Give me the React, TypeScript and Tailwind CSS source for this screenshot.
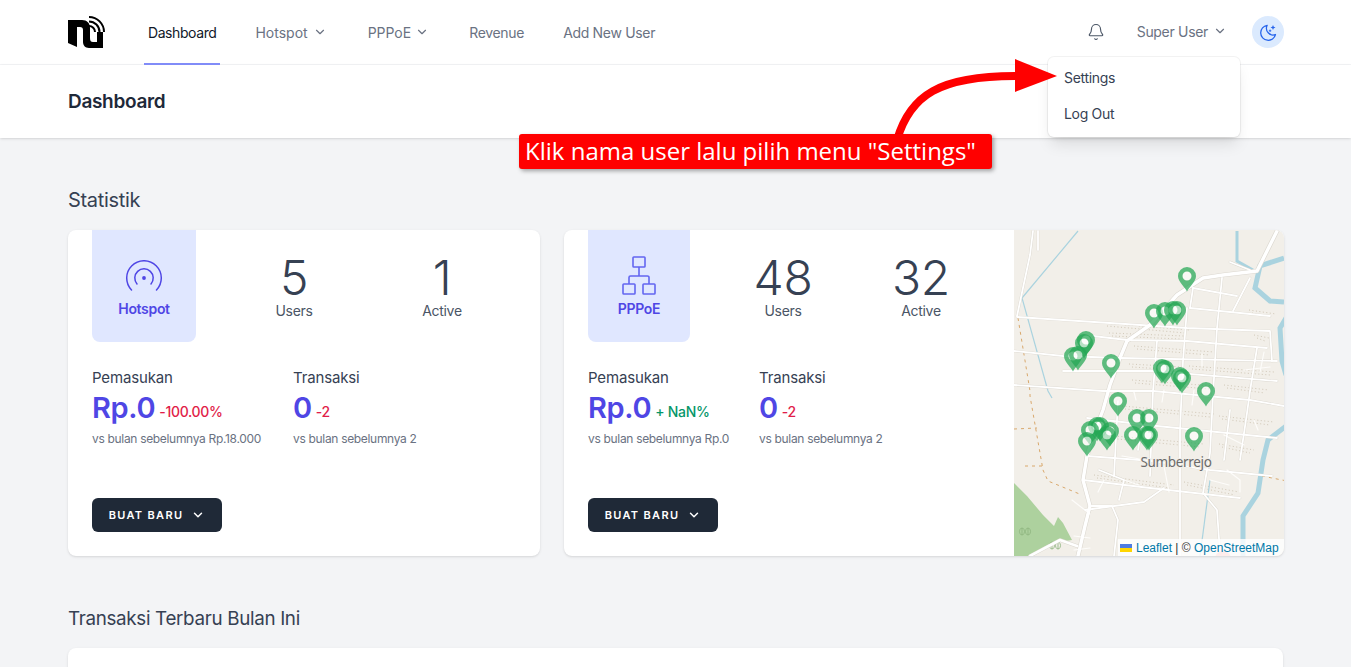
import React from "react";
import { ChevronDown, Bell } from "lucide-react";

const F = "font-['Inter','Liberation_Sans',sans-serif]";

function Logo() {
  return (
    <svg width="37" height="33" viewBox="0 0 37 33" className="shrink-0">
      <path d="M0 4H14C19 4 22 7 22 12V22C22 25 23 26 25 26H29V16H35V32H21C17 32 15 29 15 26V14C15 12 14 11 12 11H9V31L0 27Z" fill="#000" />
      <path d="M21 1A15 15 0 0 1 36 16M21 5.5A10.5 10.5 0 0 1 31.500 16M21 10A6 6 0 0 1 27 16" stroke="#000" strokeWidth="2" fill="none" />
    </svg>
  );
}

function Moon() {
  return (
    <svg width="20" height="20" viewBox="0 0 24 24" fill="none" stroke="#2563eb" strokeWidth="1.5" strokeLinecap="round" strokeLinejoin="round">
      <path d="M11 4a9 9 0 1 0 10 11 8 8 0 0 1-10-11z" />
      <path d="M18 3.500l.9 2.100 2.100.9-2.100.9-.9 2.100-.9-2.100-2.100-.9 2.100-.9z" fill="#2563eb" stroke="none" />
      <path d="M14.500 9.500v2M13.500 10.500h2" strokeWidth="1" />
    </svg>
  );
}

function HotspotIcon() {
  return (
    <svg width="38" height="33" viewBox="0 0 38 33" fill="none" stroke="#4f46e5" strokeWidth="1.5" strokeLinecap="round">
      <path d="M6.500 30A17.300 17.300 0 1 1 31.500 30" />
      <path d="M12 24A9.200 9.200 0 1 1 26 24" />
      <circle cx="19" cy="18" r="1.900" fill="#4f46e5" stroke="none" />
    </svg>
  );
}

function NetworkIcon() {
  return (
    <svg width="36" height="40" viewBox="0 0 36 40" fill="none" stroke="#6366f1" strokeWidth="1.600" strokeLinejoin="round">
      <rect x="12" y="1" width="12" height="10" rx="0.800" />
      <path d="M18 11V20M8 28v-6.500a1.500 1.500 0 0 1 1.500-1.500h17a1.500 1.500 0 0 1 1.500 1.500V28" />
      <rect x="2" y="28" width="12" height="10" rx="0.800" />
      <rect x="22" y="28" width="12" height="10" rx="0.800" />
    </svg>
  );
}

const markers: [number, number][] = [
  [173, 46], [140, 83], [151, 81], [159, 80], [163, 80], [72, 110], [70, 113], [59, 126], [64, 125],
  [97, 133], [148, 138], [151, 139], [166, 146], [168, 148], [192, 161], [104, 171], [123, 188], [135, 188],
  [119, 205], [133, 205], [135, 205], [180, 206], [86, 196], [83, 196], [76, 200], [96, 201], [93, 205], [73, 211],
];

const roads = [
  "M263 1L243 41L209 45L189 48L163 65L136 95L113 111L106 128L96 155L89 180L79 206L73 226L69 250L76 276L71 296L64 326",
];
const minor = [
  "M19 1L16 25L3 86", "M3 87L173 98L256 101L258 131", "M176 78L256 86", "M179 58L223 66",
  "M0 121L49 126L106 128L263 131", "M79 106L113 110L173 111L253 118", "M49 141L139 141L263 151", "M0 155L89 161L139 161L236 170L270 176",
  "M73 188L143 196L263 208", "M73 226L139 231L196 240L258 246", "M69 250L136 258L226 268", "M71 280L130 272L150 258",
  "M173 78L169 131L166 200L166 326", "M208 48L203 98L199 165L196 223L189 263L203 280L206 323", "M236 48L219 81", "M143 111L139 161L136 246",
  "M243 118L236 161L233 183L226 230", "M104 171L100 246", "M76 276L98 276L104 290L100 326", "M24 1L24 20",
  "M216 32L236 40", "M179 58L176 78", "M128 196L124 220", "M216 180L210 230", "M85 240L110 250L105 270",
];
const alley = [
  "M150 236L155 262", "M84 262L90 250", "M58 270L76 284", "M108 226L150 233", "M210 205L230 215", "M213 240L226 250L226 262", "M60 306L76 308", "M60 320L76 318",
  "M250 122L246 142", "M188 136L188 124", "M230 140L256 137", "M110 250L125 255", "M196 250L215 255", "M180 160L178 175", "M150 160L148 172", "M120 162L122 170", "M240 190L244 200",
];
const stipple = [
  [90, 93, 175, 100], [95, 103, 170, 106], [120, 116, 200, 122], [115, 134, 168, 137], [175, 136, 260, 142], [118, 150, 200, 156], [210, 155, 255, 160],
  [108, 176, 200, 184], [205, 186, 260, 192], [90, 205, 190, 214], [205, 214, 240, 220], [240, 105, 255, 108], [235, 80, 262, 84], [80, 245, 160, 255], [170, 252, 225, 262],
];

function MapView() {
  return (
    <div className="relative w-[270px] shrink-0 overflow-hidden rounded-r-lg bg-[#f2efe9]">
      <svg width="270" height="326" viewBox="0 0 270 326" className="block">
        <rect width="270" height="326" fill="#f2efe9" />
        <path d="M0 253L13 266L29 285L40 296L44 287L49 293L58 310L39 313L16 326L0 326Z" fill="#add19e" />
        <g fill="none" stroke="#8db47e" strokeWidth="0.800">
          <path d="M8 305V298M8 298a2.500 3.500 0 1 0 .01 0M14 305V298M14 298a2.500 3.500 0 1 0 .01 0" />
          <path d="M38 319V312M38 312a2.500 3.500 0 1 0 .01 0M44 319V312M44 312a2.500 3.500 0 1 0 .01 0" />
        </g>
        <g stroke="#c4b8a3" strokeDasharray="1 2.500" opacity="0.7">
          {stipple.map((l, i) => (
            <g key={i}>
              <line x1={l[0]} y1={l[1]} x2={l[2]} y2={l[3]} strokeWidth="1" />
              <line x1={l[0] + 3} y1={l[1] + 3} x2={l[2] - 4} y2={l[3] + 3} strokeWidth="1" />
            </g>
          ))}
        </g>
        <g fill="none" stroke="#aad3df">
          <path d="M64 1L8 68L34 161L38 168" strokeWidth="1.200" />
          <path d="M223 1L223 31L239 40" strokeWidth="3" />
          <path d="M270 28L246 36L241 58L256 71L270 72" strokeWidth="5" />
          <path d="M272 88L266 98L268 131L272 145" strokeWidth="5" />
          <path d="M276 193L254 210L249 230L244 263L229 286L229 326" strokeWidth="5" />
          <path d="M196 250L186 326" strokeWidth="1.200" />
        </g>
        <g fill="none" stroke="#d9a86c" strokeWidth="1" strokeDasharray="3 4">
          <path d="M4 88L16 161L16 166L29 240L34 251L68 265" />
          <path d="M0 199L23 198" />
          <path d="M11 236L28 236" />
          <path d="M248 246L273 251" />
        </g>
        <g fill="none" stroke="#dcd8d0" strokeLinecap="round" strokeLinejoin="round">
          {minor.map((d, i) => <path key={i} d={d} strokeWidth="2.600" />)}
          {roads.map((d, i) => <path key={i} d={d} strokeWidth="4.600" />)}
          <path d="M16 326L46 310L63 316" strokeWidth="3.600" />
        </g>
        <g fill="none" stroke="#fff" strokeLinecap="round" strokeLinejoin="round">
          {alley.map((d, i) => <path key={i} d={d} strokeWidth="1.200" stroke="#fdfcfa" />)}
          {minor.map((d, i) => <path key={i} d={d} strokeWidth="1.800" />)}
          {roads.map((d, i) => <path key={i} d={d} strokeWidth="3.400" />)}
          <path d="M16 326L46 310L63 316" strokeWidth="2.600" />
        </g>
        <text x="162" y="237" textAnchor="middle" fontFamily="'Noto Sans',sans-serif" fontSize="13.500" fill="#6b6b6b" stroke="#f2efe9" strokeWidth="2" paintOrder="stroke">Sumberrejo</text>
        <circle cx="209" cy="329" r="8" fill="#f87171" fillOpacity="0.6" />
        {markers.map(([x, y], i) => (
          <g key={i} transform={`translate(${x} ${y})`}>
            <circle r="4.500" fill="#fff" fillOpacity="0.55" />
            <path fill="#22a653" fillOpacity="0.72" fillRule="evenodd" d="M0 15.500C-2 11-9 6-9 0A9 9 0 0 1 9 0C9 6 2 11 0 15.500ZM0-4.500A4.500 4.500 0 1 0 0 4.500A4.500 4.500 0 1 0 0-4.500Z" />
          </g>
        ))}
      </svg>
      <div className="absolute bottom-0 right-0 flex h-[17px] w-[166px] items-center gap-1 bg-white/80 pl-[2px] font-['Liberation_Sans',sans-serif] text-[12px] tracking-normal whitespace-nowrap text-[#333]">
        <svg width="12" height="8" viewBox="0 0 12 8" className="shrink-0"><rect width="12" height="4" fill="#4C7BE1" /><rect y="4" width="12" height="4" fill="#FFD500" /></svg>
        <span><span className="text-[#0078a8]">Leaflet</span> | © <span className="text-[#0078a8]">OpenStreetMap</span></span>
      </div>
    </div>
  );
}

function Button() {
  return (
    <button className="flex h-[34px] w-[130px] items-center justify-center gap-2 rounded-md bg-[#1f2937] text-[11px] font-semibold tracking-[0.12em] text-white">
      BUAT BARU <ChevronDown size={14} strokeWidth={2.500} />
    </button>
  );
}

function Metric({ label, value, delta, deltaCls, sub, w }: { label: string; value: string; delta: string; deltaCls: string; sub: string; w: string }) {
  return (
    <div className={w}>
      <div className="text-[15px] leading-6 tracking-[-0.01em] text-gray-700">{label}</div>
      <div className="flex h-9 items-center gap-1">
        <span className="text-[29px] font-semibold leading-9 text-[#4f46e5]">{value}</span>
        <span className="mt-[7px] text-[14px] font-medium leading-5"><span className={deltaCls}>{delta}</span></span>
      </div>
      <div className="mt-[5px] whitespace-nowrap text-[12px] leading-4 text-gray-500">{sub}</div>
    </div>
  );
}

function Count({ n, label, w }: { n: string; label: string; w: string }) {
  return (
    <div className={`flex flex-col items-center ${w}`}>
      <div className="mt-[24px] text-[48px] font-light leading-[48px] text-gray-700">{n}</div>
      <div className="-mt-[1px] text-[14px] leading-5 text-gray-600">{label}</div>
    </div>
  );
}

export default function App() {
  return (
    <div className={`relative h-[667px] w-full overflow-hidden bg-[#f3f4f6] ${F} tracking-[-0.02em]`}>
      <nav className="flex h-[65px] items-center border-b border-gray-100 bg-white pl-[68px] pr-[67px]">
        <Logo />
        <div className="ml-[39px] flex h-full items-center text-[14px]">
          <div className="relative flex h-full items-center px-1 tracking-[-0.03em] text-gray-900">
            Dashboard
            <div className="absolute inset-x-0 -bottom-px h-[2px] bg-[#818cf8]" />
          </div>
          <div className="ml-[35px] flex items-center gap-[5px] tracking-normal text-gray-500">Hotspot <ChevronDown size={14} /></div>
          <div className="ml-[41px] flex items-center gap-[4px] tracking-normal text-gray-500">PPPoE <ChevronDown size={14} /></div>
          <div className="ml-[40px] text-gray-500">Revenue</div>
          <div className="ml-[39px] text-gray-500">Add New User</div>
        </div>
        <div className="ml-auto flex items-center">
          <Bell size={18} strokeWidth={1.500} className="text-gray-600" />
          <div className="ml-8 flex items-center gap-[5px] pb-[2px] text-[14px] text-gray-500">Super User <ChevronDown size={14} /></div>
          <div className="ml-[25px] flex h-8 w-8 items-center justify-center rounded-full bg-[#dbeafe]"><Moon /></div>
        </div>
      </nav>

      <header className="flex h-[73px] items-center bg-white pl-[68px] shadow">
        <h1 className="text-[19px] font-semibold leading-7 text-gray-800">Dashboard</h1>
      </header>

      <main className="px-[68px]">
        <h2 className="mt-[50px] text-[20px] leading-6 text-gray-700">Statistik</h2>
        <div className="mt-[18px] grid grid-cols-[472px_720px] gap-6">
          <section className="flex h-[326px] flex-col rounded-lg bg-white px-6 shadow-sm">
            <div className="flex">
              <div className="flex h-[112px] w-[104px] flex-col items-center rounded-b-lg bg-[#e0e7ff] pt-[30px]">
                <HotspotIcon />
                <div className="mt-[6px] text-[14px] font-semibold leading-5 text-[#4f46e5]">Hotspot</div>
              </div>
              <div className="ml-6 flex">
                <Count n="5" label="Users" w="w-[148px]" />
                <Count n="1" label="Active" w="w-[148px]" />
              </div>
            </div>
            <div className="mt-6 flex">
              <Metric w="w-[201px]" label="Pemasukan" value="Rp.0" delta="-100.00%" deltaCls="text-[#e11d48]" sub="vs bulan sebelumnya Rp.18.000" />
              <Metric w="w-[160px]" label="Transaksi" value="0" delta="-2" deltaCls="text-[#e11d48]" sub="vs bulan sebelumnya 2" />
            </div>
            <div className="mt-auto mb-6"><Button /></div>
          </section>

          <section className="flex h-[326px] overflow-hidden rounded-lg bg-white shadow-sm">
            <div className="flex min-w-0 flex-1 flex-col px-6">
              <div className="flex">
                <div className="flex h-[112px] w-[102px] flex-col items-center rounded-b-lg bg-[#e0e7ff] pt-[26px]">
                  <NetworkIcon />
                  <div className="mt-[3px] text-[14px] font-semibold leading-5 text-[#4f46e5]">PPPoE</div>
                </div>
                <div className="ml-6 flex">
                  <Count n="48" label="Users" w="w-[138px]" />
                  <Count n="32" label="Active" w="w-[138px]" />
                </div>
              </div>
              <div className="mt-6 flex">
                <Metric w="w-[171px]" label="Pemasukan" value="Rp.0" delta="+ NaN%" deltaCls="text-[#059669]" sub="vs bulan sebelumnya Rp.0" />
                <Metric w="w-[130px]" label="Transaksi" value="0" delta="-2" deltaCls="text-[#e11d48]" sub="vs bulan sebelumnya 2" />
              </div>
              <div className="mt-auto mb-6"><Button /></div>
            </div>
            <MapView />
          </section>
        </div>
        <h2 className="mt-[51px] text-[18.800px] leading-6 text-gray-700">Transaksi Terbaru Bulan Ini</h2>
        <div className="mt-[17px] h-[100px] rounded-lg bg-white shadow-sm" />
      </main>

      <div className="absolute left-[1048px] top-[57px] w-[192px] rounded-md bg-white pt-[2px] pb-[6px] text-[14px] text-gray-700 shadow-lg ring-1 ring-black/5">
        <div className="flex h-9 items-center px-4">Settings</div>
        <div className="flex h-9 items-center px-4">Log Out</div>
      </div>

      <svg className="absolute left-[880px] top-[50px]" width="190" height="95" viewBox="0 0 190 95" fill="none">
        <path d="M17 90C30 45 60 26 135 26" stroke="#f00" strokeWidth="8" />
        <path d="M135 9L177 26L135 42Z" fill="#f00" />
      </svg>

      <div className="absolute left-[519px] top-[134px] flex h-[35px] w-[473px] items-center rounded-[3px] bg-[#f00] pb-[2px] pl-[6px] font-['Open_Sans',sans-serif] text-[24px] tracking-normal whitespace-pre text-white shadow-[2px_2px_4px_rgba(0,0,0,0.35)]">
        Klik nama user lalu pilih menu "Settings"
      </div>
    </div>
  );
}
